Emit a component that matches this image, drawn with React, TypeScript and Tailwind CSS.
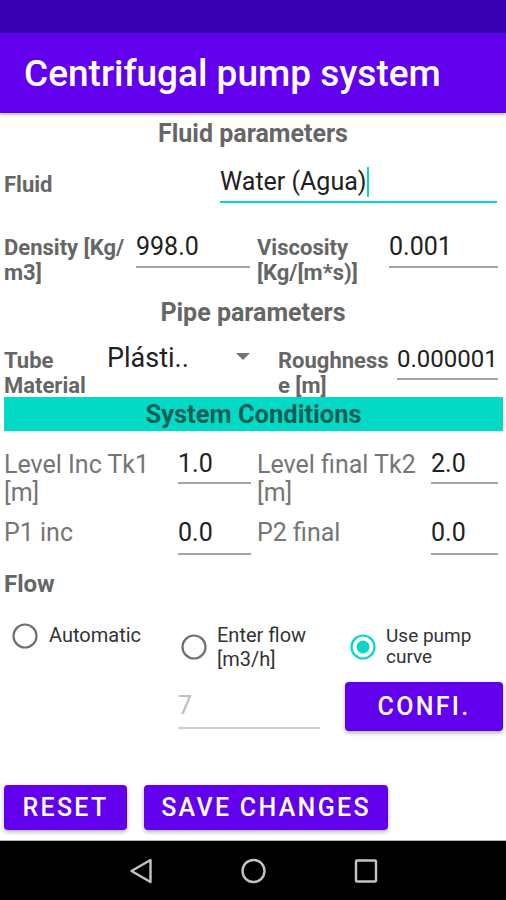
import React from "react";

const F = { fontFamily: "Roboto, 'Noto Sans', sans-serif" } as const;

function Underlined({
  text,
  w,
  mt,
  pb = 4,
  color = "text-[#212121]",
  line = "border-[#a5a5a5]",
  size = "text-[25px]",
}: {
  text: string;
  w: string;
  mt: string;
  pb?: number;
  color?: string;
  line?: string;
  size?: string;
}) {
  return (
    <div className={`${w} ${mt} shrink-0`}>
      <div
        className={`${size} leading-[30px] ${color} border-b-2 ${line} whitespace-nowrap`}
        style={{ paddingBottom: pb }}
      >
        {text}
      </div>
    </div>
  );
}

function Radio({ checked }: { checked?: boolean }) {
  return (
    <svg width="26" height="26" viewBox="0 0 26 26" className="shrink-0">
      <circle
        cx="13"
        cy="13"
        r="11.5"
        fill="none"
        stroke={checked ? "#03DAC5" : "#6f6f6f"}
        strokeWidth="2.2"
      />
      {checked && <circle cx="13" cy="13" r="6.5" fill="#03DAC5" />}
    </svg>
  );
}

export default function App() {
  return (
    <div className="w-[506px] h-[900px] flex flex-col bg-white overflow-hidden" style={F}>
      {/* status bar */}
      <div className="h-[33px] bg-[#3700B3] shrink-0" />
      {/* app bar */}
      <div className="h-[80px] bg-[#6200EE] shrink-0 pl-[24px] pt-[19px] shadow-[0_2px_3px_rgba(0,0,0,0.25)] relative z-10">
        <div className="text-white text-[37px] leading-[44px] font-medium whitespace-nowrap">
          Centrifugal pump system
        </div>
      </div>

      {/* content */}
      <div className="flex-1 flex flex-col">
        {/* Fluid parameters */}
        <div className="pt-[7px] h-[35px] text-center text-[25px] leading-[28px] font-bold text-[#666666]">
          Fluid parameters
        </div>

        {/* Fluid row */}
        <div className="flex h-[56px] pl-[4px]">
          <div className="w-[216px] mt-[24px] text-[22px] leading-[25px] font-bold text-[#666666]">
            Fluid
          </div>
          <div className="w-[277px] mt-[19px] shrink-0">
            <div className="text-[25px] leading-[30px] text-[#212121] border-b-2 border-[#03DAC5] pb-[4px] flex items-center whitespace-nowrap">
              <span>Water (Agua)</span>
              <span className="inline-block w-[2px] h-[30px] bg-[#03DAC5] ml-[1px]" />
            </div>
          </div>
        </div>

        {/* Density row */}
        <div className="flex h-[82px] pl-[4px]">
          <div className="w-[132px] mt-[32px] text-[22px] leading-[24.7px] font-bold text-[#666666] whitespace-nowrap">
            Density [Kg/
            <br />
            m3]
          </div>
          <Underlined text="998.0" w="w-[114px]" mt="mt-[28px]" pb={4} />
          <div className="w-[7px]" />
          <div className="w-[132px] mt-[32px] text-[22px] leading-[24.7px] font-bold text-[#666666] whitespace-nowrap">
            Viscosity
            <br />
            [Kg/[m*s)]
          </div>
          <Underlined text="0.001" w="w-[109px]" mt="mt-[28px]" pb={4} />
        </div>

        {/* Pipe parameters */}
        <div className="pt-[13px] h-[41px] text-center text-[25px] leading-[28px] font-bold text-[#666666]">
          Pipe parameters
        </div>

        {/* Tube row */}
        <div className="flex h-[70px] pl-[4px]">
          <div className="w-[103px] mt-[21px] text-[22px] leading-[25px] font-bold text-[#666666] whitespace-nowrap">
            Tube
            <br />
            Material
          </div>
          <div className="w-[171px] mt-[15px] flex items-start">
            <div className="w-[129px] text-[27px] leading-[32px] text-[#212121] whitespace-nowrap">
              Plásti..
            </div>
            <svg width="14" height="8" viewBox="0 0 14 8" className="mt-[11px]">
              <path d="M0 0 L14 0 L7 7 Z" fill="#757575" />
            </svg>
          </div>
          <div className="w-[119px] mt-[21px] h-[49px] overflow-hidden text-[22px] leading-[25px] font-bold text-[#666666] whitespace-nowrap">
            Roughness
            <br />e [m]
          </div>
          <Underlined text="0.000001" w="w-[101px]" mt="mt-[17px]" pb={4} size="text-[24px]" />
        </div>

        {/* System Conditions */}
        <div className="mx-[4px] w-[499px] h-[34px] bg-[#03DAC5] text-center text-[25.5px] leading-[34px] font-bold text-[#135e56]">
          System Conditions
        </div>

        {/* Level row */}
        <div className="flex h-[77px] pl-[4px]">
          <div className="w-[174px] mt-[20px] text-[25px] leading-[28.4px] text-[#757575] whitespace-nowrap">
            Level Inc Tk1
            <br />
            [m]
          </div>
          <Underlined text="1.0" w="w-[73px]" mt="mt-[18px]" pb={3} />
          <div className="w-[6px]" />
          <div className="w-[174px] mt-[20px] text-[25px] leading-[28.4px] text-[#757575] whitespace-nowrap">
            Level final Tk2
            <br />
            [m]
          </div>
          <Underlined text="2.0" w="w-[67px]" mt="mt-[18px]" pb={3} />
        </div>

        {/* P row */}
        <div className="flex h-[48px] pl-[4px]">
          <div className="w-[174px] mt-[11px] text-[25px] leading-[28.4px] text-[#757575] whitespace-nowrap">
            P1 inc
          </div>
          <Underlined text="0.0" w="w-[73px]" mt="mt-[10px]" pb={5} />
          <div className="w-[6px]" />
          <div className="w-[174px] mt-[11px] text-[25px] leading-[28.4px] text-[#757575] whitespace-nowrap">
            P2 final
          </div>
          <Underlined text="0.0" w="w-[67px]" mt="mt-[10px]" pb={5} />
        </div>

        {/* Flow */}
        <div className="pl-[4px] pt-[14px] h-[42px] text-[24px] leading-[28px] font-bold text-[#666666]">
          Flow
        </div>

        {/* Radios */}
        <div className="flex h-[74px] pl-[12px]">
          <div className="w-[169px] flex items-start">
            <div className="mt-[25px]">
              <Radio />
            </div>
            <div className="ml-[11px] mt-[25px] text-[20px] leading-[24px] text-[#333333] whitespace-nowrap">
              Automatic
            </div>
          </div>
          <div className="w-[169px] flex items-start">
            <div className="mt-[36px]">
              <Radio />
            </div>
            <div className="ml-[10px] mt-[25px] text-[20px] leading-[24px] text-[#333333] whitespace-nowrap">
              Enter flow
              <br />
              [m3/h]
            </div>
          </div>
          <div className="flex items-start">
            <div className="mt-[36px]">
              <Radio checked />
            </div>
            <div className="ml-[10px] mt-[27px] text-[19px] leading-[21px] text-[#333333] whitespace-nowrap">
              Use pump
              <br />
              curve
            </div>
          </div>
        </div>

        {/* hint + confi */}
        <div className="flex h-[59px] pl-[178px]">
          <Underlined
            text="7"
            w="w-[142px]"
            mt="mt-[19px]"
            pb={6}
            color="text-[#bdbdbd]"
            line="border-[#cfcfcf]"
          />
          <div className="ml-[25px] mt-[10px] w-[158px] h-[49px] rounded-[4px] bg-[#6200EE] shadow-[0_2px_4px_rgba(0,0,0,0.3)] flex items-center justify-center text-white text-[25px] font-medium tracking-[2.3px]">
            CONFI.
          </div>
        </div>

        {/* bottom buttons */}
        <div className="flex pl-[4px] mt-[54px] gap-[17px]">
          <div className="w-[123px] h-[45px] rounded-[4px] bg-[#6200EE] shadow-[0_2px_4px_rgba(0,0,0,0.3)] flex items-center justify-center text-white text-[25px] font-medium tracking-[2.3px]">
            RESET
          </div>
          <div className="w-[244px] h-[45px] rounded-[4px] bg-[#6200EE] shadow-[0_2px_4px_rgba(0,0,0,0.3)] flex items-center justify-center text-white text-[25px] font-medium tracking-[2.3px]">
            SAVE CHANGES
          </div>
        </div>
      </div>

      {/* nav bar */}
      <div className="h-[1px] bg-[#b5b5b5] shrink-0" />
      <div className="h-[59px] bg-black shrink-0 flex items-center">
        <svg width="506" height="59" viewBox="0 0 506 59">
          <path
            d="M150.5 19 L150.5 41 L131.5 30 Z"
            fill="none"
            stroke="#c4c4c4"
            strokeWidth="2.4"
            strokeLinejoin="round"
          />
          <circle cx="253.5" cy="30" r="11" fill="none" stroke="#c4c4c4" strokeWidth="2.4" />
          <rect x="356" y="19.5" width="20" height="21" fill="none" stroke="#c4c4c4" strokeWidth="2.4" rx="1" />
        </svg>
      </div>
    </div>
  );
}
